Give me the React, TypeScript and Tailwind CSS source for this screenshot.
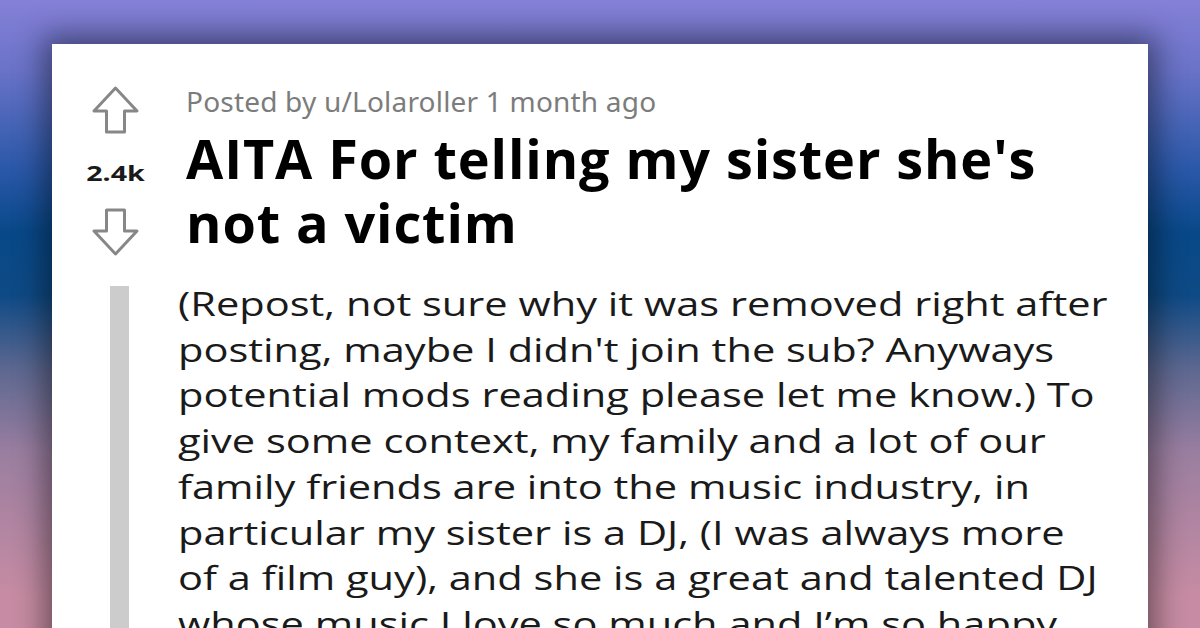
const lines = [
  '(Repost, not sure why it was removed right after',
  "posting, maybe I didn't join the sub? Anyways",
  'potential mods reading please let me know.) To',
  'give some context, my family and a lot of our',
  'family friends are into the music industry, in',
  'particular my sister is a DJ, (I was always more',
  'of a film guy), and she is a great and talented DJ',
  'whose music I love so much and I\u2019m so happy',
]

function VoteArrow({ down = false }: { down?: boolean }) {
  return (
    <svg width="47" height="48" viewBox="0 0 47 48" className={down ? 'rotate-180' : ''}>
      <path
        d="M23.5 2 L45 25 L32.5 25 L32.5 46 L14.5 46 L14.5 25 L2 25 Z"
        fill="none"
        stroke="#878787"
        strokeWidth="3"
        strokeLinejoin="round"
      />
    </svg>
  )
}

export default function App() {
  return (
    <div className="h-[628px] w-[1200px] overflow-hidden bg-[linear-gradient(to_bottom,#8580d8_0%,#6a73c8_11%,#2a58a8_27%,#084888_37%,#0e4a85_47%,#5e6890_59%,#9a7ea0_72%,#c78ca3_95%)] px-[52px] pt-[44px]">
      <div className="flex h-[640px] flex-col overflow-hidden bg-white shadow-[0_0_28px_8px_rgba(0,0,0,0.45)]">
        <div className="flex">
          <div className="flex w-[126px] shrink-0 flex-col items-center pt-[42px]">
            <VoteArrow />
            <div className="mt-[27px] scale-x-[1.3] font-['Noto_Sans',sans-serif] text-[22px] font-bold leading-[22px] text-[#1a1a1b]">
              2.4k
            </div>
            <div className="mt-[25px]">
              <VoteArrow down />
            </div>
          </div>
          <div className="pl-[8px] pt-[41px]">
            <p className="font-['Noto_Sans',sans-serif] text-[28px] leading-[32px] tracking-[0.2px] text-[#7c7c7c]">
              Posted by u/Lolaroller 1 month ago
            </p>
            <h1 className="mt-[9px] font-['Open_Sans',sans-serif] text-[54px] font-bold leading-[64px] tracking-[0.9px] text-black">
              AITA For telling my sister she's
              <br />
              not a victim
            </h1>
          </div>
        </div>
        <div className="mt-[25px] flex">
          <div className="w-[126px] shrink-0 pl-[58px] pt-[5px]">
            <div className="h-[400px] w-[19px] bg-[#cccccc]" />
          </div>
          <div className="origin-left scale-x-[1.26] whitespace-nowrap font-['Open_Sans',sans-serif] text-[33px] leading-[45.7px] text-[#1a1a1a]">
            {lines.map((line) => (
              <p key={line}>{line}</p>
            ))}
          </div>
        </div>
      </div>
    </div>
  )
}
